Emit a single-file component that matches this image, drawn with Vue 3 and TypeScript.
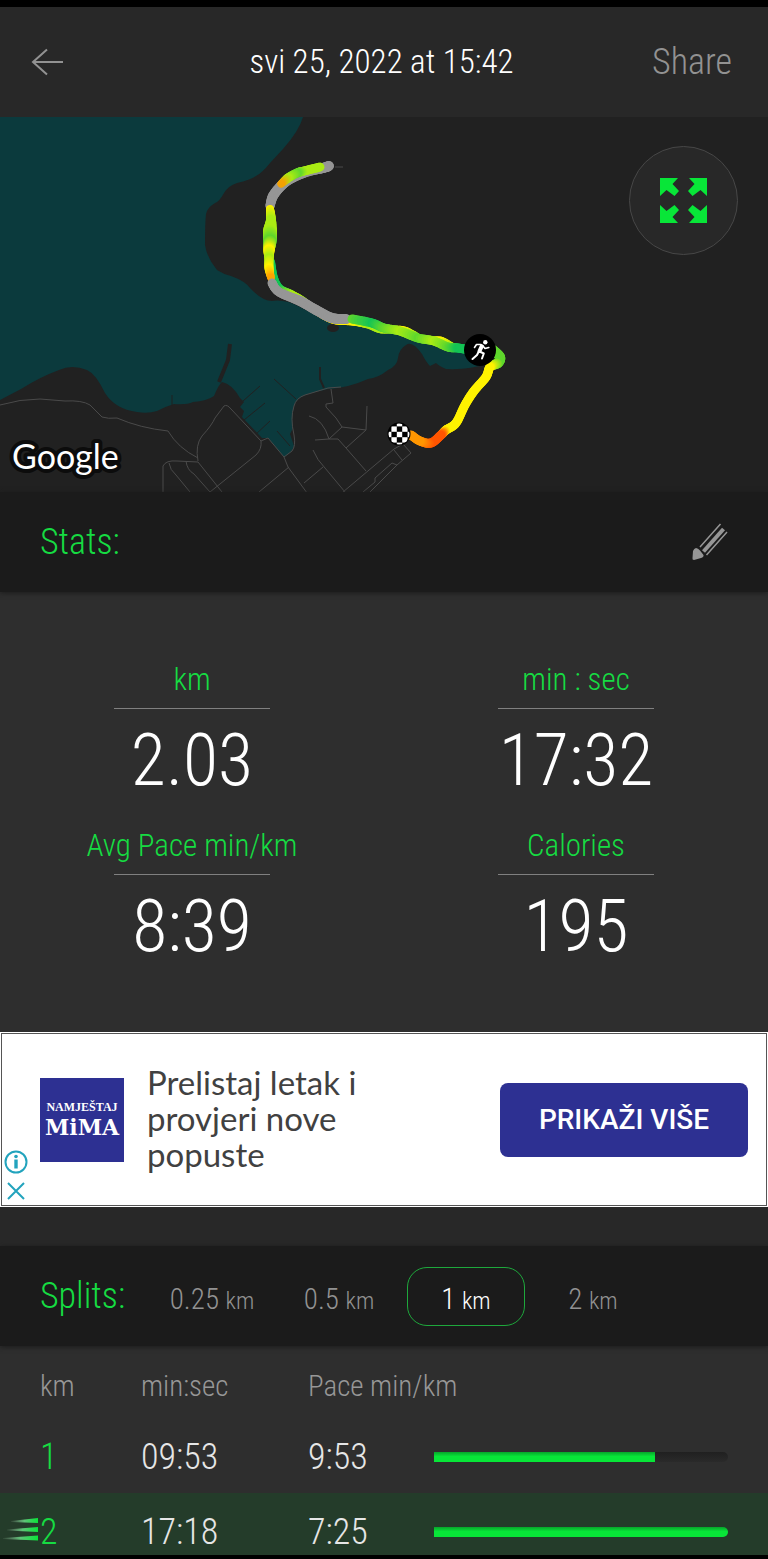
<script setup lang="ts">
import { ref } from 'vue'

interface RoutePoint {
  x: number
  y: number
  color: [number, number, number]
  width?: number
}

interface RouteSegment {
  x1: number
  y1: number
  x2: number
  y2: number
  color: string
  width: number
}

const GRAY: [number, number, number] = [150, 150, 150]
const LIME: [number, number, number] = [170, 235, 20]
const GREEN: [number, number, number] = [95, 215, 45]
const DEEP: [number, number, number] = [20, 195, 85]
const YELLOW: [number, number, number] = [255, 242, 0]
const ORANGE: [number, number, number] = [255, 150, 0]
const RED: [number, number, number] = [255, 85, 0]

// Catmull-Rom interpolation keeps the track smooth between recorded points.
function curve(p0: number, p1: number, p2: number, p3: number, t: number): number {
  return (
    0.5 *
    (2 * p1 +
      (p2 - p0) * t +
      (2 * p0 - 5 * p1 + 4 * p2 - p3) * t * t +
      (3 * p1 - p0 - 3 * p2 + p3) * t * t * t)
  )
}

function buildSegments(points: RoutePoint[]): RouteSegment[] {
  const steps = 8
  const result: RouteSegment[] = []
  for (let i = 0; i < points.length - 1; i++) {
    const a = points[i]
    const b = points[i + 1]
    const before = points[i - 1] ?? a
    const after = points[i + 2] ?? b
    const mix = (from: number, to: number, t: number) => from + (to - from) * t
    for (let s = 0; s < steps; s++) {
      const t0 = s / steps
      const t1 = (s + 1) / steps
      const rgb = a.color.map((c, k) => Math.round(mix(c, b.color[k], t0)))
      result.push({
        x1: curve(before.x, a.x, b.x, after.x, t0),
        y1: curve(before.y, a.y, b.y, after.y, t0),
        x2: curve(before.x, a.x, b.x, after.x, t1),
        y2: curve(before.y, a.y, b.y, after.y, t1),
        color: `rgb(${rgb.join(',')})`,
        width: mix(a.width ?? 10, b.width ?? 10, t0),
      })
    }
  }
  return result
}

const outbound = buildSegments([
  { x: 271, y: 262, color: DEEP, width: 8 },
  { x: 274, y: 278, color: DEEP, width: 8 },
  { x: 280, y: 288, color: DEEP, width: 7 },
  { x: 292, y: 294, color: LIME, width: 7 },
  { x: 304, y: 301, color: LIME, width: 7 },
  { x: 318, y: 313, color: ORANGE, width: 6 },
  { x: 334, y: 321, color: YELLOW, width: 6 },
  { x: 352, y: 322, color: YELLOW, width: 7 },
  { x: 368, y: 325, color: LIME, width: 7 },
  { x: 382, y: 330, color: LIME, width: 7 },
  { x: 402, y: 329, color: YELLOW, width: 6 },
  { x: 414, y: 334, color: LIME, width: 6 },
  { x: 424, y: 340, color: GREEN, width: 6 },
  { x: 440, y: 339, color: YELLOW, width: 5 },
  { x: 452, y: 345, color: LIME, width: 5 },
])

const inbound = [
  ...buildSegments([
    { x: 329, y: 166, color: GRAY },
    { x: 323, y: 168, color: GRAY },
    { x: 306, y: 172, color: GRAY },
    { x: 290, y: 179, color: GRAY },
    { x: 281, y: 186, color: GRAY },
    { x: 273, y: 196, color: GRAY },
    { x: 270, y: 206, color: GRAY, width: 9 },
  ]),
  ...buildSegments([
    { x: 320, y: 167, color: LIME, width: 9 },
    { x: 304, y: 171, color: LIME, width: 9 },
    { x: 297, y: 173, color: GREEN, width: 9 },
    { x: 288, y: 178, color: LIME, width: 9 },
    { x: 281, y: 184, color: ORANGE, width: 7 },
  ]),
  ...buildSegments([
    { x: 270, y: 209, color: YELLOW, width: 8 },
    { x: 271, y: 220, color: LIME, width: 10 },
    { x: 270, y: 231, color: LIME, width: 14 },
    { x: 270, y: 241, color: GREEN, width: 13 },
    { x: 269, y: 250, color: YELLOW, width: 11 },
    { x: 269, y: 258, color: LIME, width: 9 },
    { x: 269, y: 268, color: YELLOW, width: 9 },
    { x: 271, y: 278, color: ORANGE, width: 7 },
  ]),
  ...buildSegments([
    { x: 272, y: 283, color: GRAY, width: 9 },
    { x: 279, y: 292, color: GRAY, width: 9 },
    { x: 300, y: 301, color: GRAY },
    { x: 316, y: 310, color: GRAY },
    { x: 332, y: 318, color: GRAY },
    { x: 346, y: 319, color: GRAY },
  ]),
  ...buildSegments([
    { x: 352, y: 319, color: GREEN, width: 9 },
    { x: 372, y: 323, color: DEEP, width: 9 },
    { x: 384, y: 328, color: GREEN, width: 9 },
    { x: 400, y: 331, color: LIME, width: 9 },
    { x: 418, y: 338, color: GREEN, width: 9 },
    { x: 434, y: 341, color: LIME, width: 9 },
    { x: 448, y: 347, color: GREEN, width: 9 },
    { x: 458, y: 348, color: DEEP, width: 9 },
    { x: 470, y: 350, color: DEEP, width: 9 },
  ]),
  ...buildSegments([
    { x: 493, y: 350, color: GREEN },
    { x: 500, y: 357, color: GREEN },
    { x: 498, y: 363, color: GREEN },
    { x: 490, y: 367, color: YELLOW, width: 9 },
    { x: 486, y: 377, color: YELLOW, width: 9 },
    { x: 474, y: 391, color: YELLOW, width: 9 },
    { x: 465, y: 405, color: YELLOW, width: 9 },
    { x: 456, y: 423, color: YELLOW, width: 9 },
    { x: 446, y: 430, color: YELLOW, width: 9 },
    { x: 441, y: 435, color: RED, width: 9 },
    { x: 431, y: 443, color: RED, width: 9 },
    { x: 420, y: 441, color: ORANGE, width: 9 },
    { x: 411, y: 435, color: ORANGE, width: 9 },
  ]),
]

const roads: string[] = [
  'M0 405Q20 399 40 399L65 401Q82 400 90 405L102 417Q108 419 117 418Q140 428 168 431Q178 448 198 458',
  'M198 461Q195 445 202 436Q212 425 215 418L224 406Q227 404 231 409L261 441L268 438L284 457L288 467L310 497',
  'M261 441Q262 449 256 455L210 492',
  'M163 492V466Q166 460 177 461L198 462L222 492',
  'M169 463Q170 470 176 475L190 492',
  'M186 461Q187 470 194 474L210 492',
  'M284 457L292 451Q296 446 294 435Q290 418 294 406Q296 398 305 395L328 388L341 387',
  'M331 389L333 403L326 404L326 407L336 418L342 427L366 430L367 406',
  'M342 427L329 439Q323 419 309 416',
  'M315 440L329 439L338 439L346 448L366 471',
  'M346 448L366 430',
  'M289 467L259 492',
  'M313 450Q317 460 325 468L345 492',
  'M323 467L304 483',
  'M343 492L394 449L403 444L411 453L397 465L392 463L375 478L375 482L363 492',
  'M394 450L402 460',
  'M397 465L370 492',
  'M335 167H343',
]

const flagCells: number[][] = []
for (let row = 0; row < 6; row++) {
  for (let col = 0; col < 6; col++) {
    if ((row + col) % 2 === 0) flagCells.push([col, row])
  }
}

const stats = [
  { label: 'km', value: '2.03' },
  { label: 'min : sec', value: '17:32' },
  { label: 'Avg Pace min/km', value: '8:39' },
  { label: 'Calories', value: '195' },
]

const distances = ['0.25', '0.5', '1', '2']
const selected = ref('1')

const splits = [
  { km: '1', time: '09:53', pace: '9:53', percent: 75, fastest: false },
  { km: '2', time: '17:18', pace: '7:25', percent: 100, fastest: true },
]
</script>

<template>
  <div class="screen">
    <header class="topbar">
      <button class="plain" type="button" aria-label="Back">
        <svg width="33" height="28" viewBox="0 0 33 28" fill="none" stroke="#929292" stroke-width="2">
          <path d="M1.500 14H32M16 1.500L2 14L16 26.500" />
        </svg>
      </button>
      <h1>svi 25, 2022 at 15:42</h1>
      <button class="plain share" type="button">Share</button>
    </header>

    <section class="map" aria-label="Route map">
      <svg class="canvas" viewBox="0 117 768 375">
        <rect x="0" y="117" width="768" height="375" fill="#212121" />
        <path
          fill="#0b3a3d"
          d="M0 117H303Q299 131 283 149L270 163Q262 173 256 176Q250 180 237 183Q228 186 224 193Q219 202 215 203Q207 208 206 214Q205 222 205 245Q207 258 217 270Q223 274 231 276Q245 281 250 288Q262 301 272 301Q285 299 300 307L334 325L372 326L420 338L466 351L496 356L486 364Q470 370 446 369Q439 366 436 363L430 366Q426 362 422 354Q412 340 406 345Q399 349 398 358Q397 366 388 370Q378 378 368 379Q348 388 328 389L308 394Q296 398 294 406Q291 420 293 428L290 434L294 446Q292 453 284 457L268 438L262 438L242 417L244 411L240 407L244 402L240 398Q232 384 222 382Q219 384 214 396Q207 401 193 402Q187 405 174 404Q164 407 157 411Q148 414 137 412Q115 409 105 393Q96 374 87 370Q72 364 59 370Q40 377 21 389L0 400Z"
        />
        <g fill="none" stroke="#212121">
          <path d="M230 344L228 360L219 382" stroke-width="4" />
          <path d="M320 367V379L324 388" stroke-width="2" />
          <path d="M243 401L260 386M244 420L265 403M255 435L270 421M274 379L296 399M277 431L290 446M172 395V406" stroke-width="1" />
        </g>
        <ellipse cx="333" cy="328" rx="6" ry="4" fill="#212121" />
        <g fill="none" stroke="#4a4a4a" stroke-width="1" stroke-linejoin="round">
          <path v-for="road in roads" :key="road" :d="road" />
        </g>
        <g stroke-linecap="round">
          <line
            v-for="(s, i) in outbound"
            :key="'o' + i"
            :x1="s.x1" :y1="s.y1" :x2="s.x2" :y2="s.y2"
            :stroke="s.color" :stroke-width="s.width"
          />
          <line
            v-for="(s, i) in inbound"
            :key="'i' + i"
            :x1="s.x1" :y1="s.y1" :x2="s.x2" :y2="s.y2"
            :stroke="s.color" :stroke-width="s.width"
          />
        </g>
        <circle cx="480" cy="350" r="16" fill="#000" />
        <g transform="translate(480 350)">
          <circle cx="5.300" cy="-7.800" r="2.200" fill="#fff" />
          <g fill="none" stroke="#fff" stroke-linecap="round" stroke-linejoin="round">
            <path d="M1.800 -3.800L-0.500 1" stroke-width="4" />
            <path d="M1 -5.500L-3.500 -5.500L-5.500 -2.500M3 -4L5 -1.500L8.800 -2.500" stroke-width="1.600" />
            <path d="M-0.500 1.500L3.800 3.500L2 8.500M-1.500 2L-3 5L-7.500 9" stroke-width="2" />
          </g>
        </g>
        <clipPath id="flag-clip"><circle cx="399" cy="434" r="10.500" /></clipPath>
        <circle cx="399" cy="434" r="11.500" fill="#000" />
        <g clip-path="url(#flag-clip)" fill="#fff">
          <rect
            v-for="[c, r] in flagCells"
            :key="c + '-' + r"
            :x="386 + c * 5.400" :y="421 + r * 5.400"
            width="5.400" height="5.400"
          />
        </g>
        <text class="brand" x="12" y="469">Google</text>
      </svg>
      <button class="expand" type="button" aria-label="Expand map">
        <svg width="47" height="46" viewBox="0 0 47 46" fill="#08e638">
          <path d="M0 0H18L12.500 6L19 13L14.500 18L6.500 12L0 18Z" />
          <path d="M47 0H29L34.500 6L28 13L32.500 18L40.500 12L47 18Z" />
          <path d="M0 45H18L12.500 39L19 32L14.500 27L6.500 33L0 27Z" />
          <path d="M47 45H29L34.500 39L28 32L32.500 27L40.500 33L47 27Z" />
        </svg>
      </button>
    </section>

    <section>
      <div class="bar stats-bar">
        <h2>Stats:</h2>
        <button class="plain" type="button" aria-label="Edit">
          <svg width="36" height="38" viewBox="0 0 36 38">
            <path d="M0.500 35L1 28Q2 25.500 4 25Q6 25 8 27.500L11.500 32Q12 34 9 35L2 37Q0 37 0.500 35Z" fill="#969696" />
            <path d="M11.500 28.500L31.500 6" stroke="#969696" stroke-width="4" />
            <path d="M8 24L28.500 1M14.500 32L35 9" stroke="#969696" stroke-width="1.500" />
          </svg>
        </button>
      </div>
      <dl class="stats">
        <div v-for="item in stats" :key="item.label" class="stat">
          <dt>{{ item.label }}</dt>
          <dd>{{ item.value }}</dd>
        </div>
      </dl>
    </section>

    <aside class="ad">
      <div class="logo">
        <span class="logo-top">NAMJEŠTAJ</span>
        <span class="logo-name">MiMA</span>
      </div>
      <p>Prelistaj letak i provjeri nove popuste</p>
      <a class="cta" href="#">PRIKAŽI VIŠE</a>
      <div class="ad-tools">
        <button class="plain" type="button" aria-label="Ad info">
          <svg width="24" height="24" viewBox="0 0 24 24">
            <circle cx="12" cy="12" r="10.500" fill="#fff" stroke="#22a3bd" stroke-width="2" />
            <circle cx="12" cy="6.500" r="1.800" fill="#22a3bd" />
            <path d="M12 9.500V18.500" stroke="#22a3bd" stroke-width="3.400" />
          </svg>
        </button>
        <button class="plain" type="button" aria-label="Close ad">
          <svg width="24" height="24" viewBox="0 0 24 24" fill="none" stroke="#22a3bd" stroke-width="2">
            <path d="M4 4L20 20M20 4L4 20" />
          </svg>
        </button>
      </div>
    </aside>

    <section>
      <div class="bar splits-bar">
        <h2>Splits:</h2>
        <div class="options">
          <button
            v-for="d in distances"
            :key="d"
            type="button"
            class="option"
            :class="{ active: d === selected }"
            :aria-pressed="d === selected"
            @click="selected = d"
          >
            {{ d }} <small>km</small>
          </button>
        </div>
      </div>
      <table class="splits">
        <colgroup>
          <col class="w-km" />
          <col class="w-time" />
          <col class="w-pace" />
          <col />
        </colgroup>
        <thead>
          <tr>
            <th class="c-km" scope="col">km</th>
            <th scope="col">min:sec</th>
            <th colspan="2" scope="col">Pace min/km</th>
          </tr>
        </thead>
        <tbody>
          <tr v-for="row in splits" :key="row.km" :class="{ fastest: row.fastest }">
            <td class="c-km">
              <svg v-if="row.fastest" class="streaks" width="36" height="24" viewBox="0 0 36 24">
                <defs>
                  <linearGradient id="streak" x1="0" x2="1">
                    <stop offset="0" stop-color="#8fae96" stop-opacity="0.100" />
                    <stop offset="0.500" stop-color="#5fc377" />
                    <stop offset="1" stop-color="#08e638" />
                  </linearGradient>
                </defs>
                <g fill="url(#streak)">
                  <path d="M8 3L35 0V5L8 4Z" />
                  <path d="M4 11.500L35 9V14L4 12.500Z" />
                  <path d="M0 20L35 17.500V22.500L0 21Z" />
                </g>
              </svg>
              {{ row.km }}
            </td>
            <td>{{ row.time }}</td>
            <td>{{ row.pace }}</td>
            <td class="c-bar">
              <div class="track"><div class="fill" :style="{ width: row.percent + '%' }"></div></div>
            </td>
          </tr>
        </tbody>
      </table>
    </section>
  </div>
</template>

<style>
body {
  margin: 0;
  background: #000;
}
</style>

<style scoped>
.screen {
  box-sizing: border-box;
  border-top: 7px solid #000;
  border-bottom: 4px solid #000;
  background: #282828;
  color: #fff;
  font-family: "Roboto Condensed", Roboto, "Liberation Sans", sans-serif;
  font-weight: 300;
}

h1,
h2,
p,
dl,
dd {
  margin: 0;
  font-weight: inherit;
}

button {
  font-family: inherit;
  font-weight: inherit;
  cursor: pointer;
}

svg {
  display: block;
}

.plain {
  padding: 0;
  border: 0;
  background: none;
  color: inherit;
}

.topbar {
  display: grid;
  grid-template-columns: 100px 1fr 100px;
  align-items: center;
  justify-items: start;
  height: 110px;
  padding: 0 36px 0 31px;
}

.topbar h1 {
  justify-self: center;
  font-size: 33px;
  line-height: 40px;
}

.topbar .share {
  justify-self: end;
  color: #929292;
  font-size: 36px;
  line-height: 40px;
}

.map {
  position: relative;
}

.canvas {
  width: 100%;
  height: auto;
}

.brand {
  fill: #fff;
  stroke: #0c0c0c;
  stroke-width: 8px;
  stroke-linejoin: round;
  paint-order: stroke;
  font-family: Lato, sans-serif;
  font-size: 34px;
  font-weight: 400;
}

.expand {
  position: absolute;
  top: 29px;
  right: 30px;
  display: flex;
  align-items: center;
  justify-content: center;
  width: 109px;
  height: 109px;
  padding: 0;
  border: 1px solid #474747;
  border-radius: 50%;
  background: #282828;
}

.bar {
  position: relative;
  display: flex;
  align-items: center;
  height: 100px;
  padding: 0 40px;
  background: #1b1b1b;
  box-shadow: 0 1px 5px #1b1b1b;
}

.bar h2 {
  color: #16dc42;
  font-size: 36px;
  line-height: 40px;
}

.stats-bar {
  justify-content: space-between;
}

.stats {
  display: grid;
  grid-template-columns: 1fr 1fr;
  row-gap: 13px;
  padding: 68px 0 53px;
  background: #2e2e2e;
}

.stat {
  display: flex;
  flex-direction: column;
  align-items: center;
}

.stat dt {
  color: #16dc42;
  font-size: 31px;
  line-height: 40px;
}

.stat dd {
  min-width: 156px;
  font-size: 72px;
  line-height: 104px;
  text-align: center;
}

.stat dd::before {
  content: "";
  display: block;
  width: 156px;
  height: 1px;
  margin: 8px auto 0;
  background: #808080;
}

.ad {
  position: relative;
  display: flex;
  align-items: center;
  box-sizing: border-box;
  min-height: 175px;
  margin-bottom: 39px;
  padding: 0 19px 0 39px;
  border: 1px solid #fff;
  outline: 1px solid #555;
  outline-offset: -2px;
  background: #fff;
}

.logo {
  display: flex;
  flex-direction: column;
  align-items: center;
  justify-content: center;
  width: 84px;
  height: 84px;
  background: #2d3092;
  font-family: "Liberation Serif", serif;
  font-weight: 700;
}

.logo-top {
  font-size: 12px;
  line-height: 14px;
}

.logo-name {
  font-family: "DejaVu Serif", serif;
  font-size: 22px;
  line-height: 26px;
}

.ad p {
  width: 240px;
  margin-left: 23px;
  padding-bottom: 4px;
  color: #414141;
  font-family: Lato, sans-serif;
  font-size: 33px;
  font-weight: 400;
  line-height: 36px;
}

.cta {
  width: 248px;
  margin-left: auto;
  border-radius: 8px;
  background: #2d3092;
  color: #fff;
  font-family: Roboto, sans-serif;
  font-size: 28px;
  font-weight: 500;
  line-height: 74px;
  text-align: center;
  text-decoration: none;
}

.ad-tools {
  position: absolute;
  bottom: 3px;
  left: 3px;
  display: grid;
  gap: 5px;
}

.splits-bar h2 {
  width: 113px;
}

.options {
  display: flex;
  gap: 9px;
}

.option {
  width: 118px;
  height: 59px;
  padding: 8px 0 0;
  border: 1px solid transparent;
  border-radius: 20px;
  background: none;
  color: #929292;
  font-size: 29px;
  line-height: 40px;
}

.option small {
  font-size: 24px;
}

.option.active {
  border-color: #1ea83c;
  color: #fff;
}

.splits {
  width: 100%;
  border-collapse: collapse;
  table-layout: fixed;
  background: #2e2e2e;
}

.w-km {
  width: 141px;
}

.w-time {
  width: 167px;
}

.w-pace {
  width: 126px;
}

.splits th {
  padding: 21px 0 13px;
  color: #979797;
  font-size: 29px;
  font-weight: inherit;
  line-height: 38px;
  text-align: left;
}

.splits td {
  padding: 20px 0 17px;
  color: #e6e6e6;
  font-size: 36px;
  line-height: 38px;
}

.splits .fastest td {
  padding-bottom: 4px;
  background: #243c2a;
}

.splits .c-km {
  position: relative;
  padding-left: 40px;
}

.splits td.c-km {
  color: #16dc42;
}

.streaks {
  position: absolute;
  top: 25px;
  left: 3px;
}

.splits .c-bar {
  padding-right: 40px;
}

.track {
  height: 10px;
  border-radius: 0 5px 5px 0;
  overflow: hidden;
  background: linear-gradient(#202020, #2a2a2a);
}

.fill {
  height: 100%;
  background: linear-gradient(#07a52b, #08e638 45%);
}
</style>
